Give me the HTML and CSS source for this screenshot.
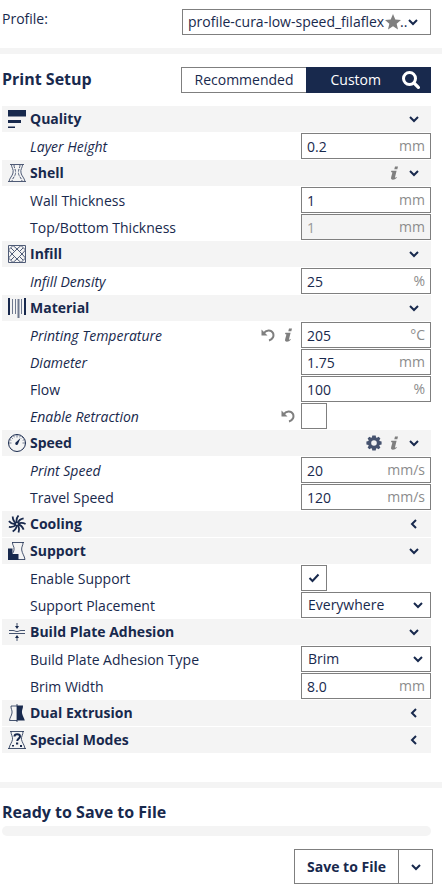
FILE: index.html
```html
<!DOCTYPE html>
<html lang="en">
<head>
<meta charset="utf-8">
<meta name="viewport" content="width=device-width, initial-scale=1">
<title>Print Setup</title>
<link rel="stylesheet" href="styles.css">
</head>
<body>
<svg class="defs" aria-hidden="true">
  <symbol id="down" viewBox="0 0 10 10"><path d="M1 3l4 4 4-4" fill="none" stroke="currentColor" stroke-width="2"/></symbol>
  <symbol id="left" viewBox="0 0 10 10"><path d="M7 1L3 5l4 4" fill="none" stroke="currentColor" stroke-width="2"/></symbol>
  <symbol id="info" viewBox="0 0 14 14"><path d="M8 .4h3l-.7 2.800h-3zM4.400 4.800h5.200L8 11.200c-.2.8.4.6 1.300-.3l.6.600c-1.300 1.500-2.600 2.200-3.900 2.200-1.700 0-2.200-.9-1.900-2.200L5.400 6.400 4 6z" fill="currentColor"/></symbol>
  <symbol id="undo" viewBox="0 0 14 14"><path d="M2.500 5.500C5 1.800 10 1.500 12 5c1.300 3-.3 6.500-4 7.500" fill="none" stroke="currentColor" stroke-width="2"/><path d="M.5 1.500v6h6z" fill="currentColor"/></symbol>
  <symbol id="gear" viewBox="0 0 16 16"><path fill="currentColor" fill-rule="evenodd" d="M6.300.5h3.400l.4 2 .8.300 1.700-1.100 1.800 1.800-1.100 1.700.300.800 2 .4v3.200l-2 .4-.3.800 1.100 1.700-1.800 1.800-1.700-1.100-.8.300-.4 2H6.300l-.4-2-.8-.3-1.700 1.100-1.800-1.800 1.100-1.700-.3-.8-2-.4V6.400l2-.4.300-.8-1.100-1.700 1.800-1.800 1.700 1.100.8-.3zM8 5.200a2.800 2.800 0 1 0 0 5.600 2.800 2.800 0 0 0 0-5.600z"/></symbol>
</svg>

<main>
  <section class="profile">
    <label for="profile">Profile:</label>
    <div class="select select-profile">
      <select id="profile"><option>profile-cura-low-speed_filaflex&nbsp;&nbsp;&nbsp;&nbsp;&hairsp;..</option></select>
      <svg class="star" viewBox="0 0 14 14" aria-hidden="true"><path d="M7 0l2 4.800 5 .4-3.800 3.300 1.200 5L7 10.800l-4.400 2.700 1.200-5L0 5.200l5-.4z"/></svg>
      <svg class="chevron"><use href="#down"/></svg>
    </div>
  </section>

  <section class="setup">
    <header class="setup-head">
      <h1>Print Setup</h1>
      <div class="tabs">
        <button type="button" class="tab">Recommended</button>
        <button type="button" class="tab tab-active">Custom
          <svg class="search" viewBox="0 0 18 18" aria-hidden="true"><circle cx="7.500" cy="7.500" r="6" fill="none" stroke="currentColor" stroke-width="3"/><path d="M11.500 11.500l6 6" stroke="currentColor" stroke-width="3.200"/></svg>
        </button>
      </div>
    </header>

    <div class="settings">
      <div class="category">
        <svg class="cat-icon" viewBox="0 0 18 18"><path d="M0 0h18v6.500H0zM0 10h13v3H0zM0 16.500h7V18H0z" fill="currentColor"/></svg>
        <h2>Quality</h2>
        <button type="button" class="icon" aria-label="Collapse"><svg class="chevron"><use href="#down"/></svg></button>
      </div>
      <div class="row changed">
        <label for="layer">Layer Height</label>
        <div class="field"><input id="layer" value="0.2"><span>mm</span></div>
      </div>

      <div class="category">
        <svg class="cat-icon thin" viewBox="0 0 18 18"><path d="M2 .5h14M0 17.500h18M3.500.5c-.3 3 2.500 4.500 1.500 8.500-.6 3-3.500 5-4 8.500M14.500.5c.3 3-2.500 4.500-1.500 8.500.6 3 3.500 5 4 8.500" fill="none" stroke="currentColor"/><path d="M6 1c0 3 2 4.500 1.500 8.500-.4 3-3 4.500-3.500 7.500M12 1c0 3-2 4.500-1.500 8.500.4 3 3 4.500 3.500 7.500" fill="none" stroke="currentColor" stroke-dasharray="3 1"/></svg>
        <h2>Shell</h2>
        <button type="button" class="icon grey" aria-label="Information"><svg class="info"><use href="#info"/></svg></button>
        <button type="button" class="icon" aria-label="Collapse"><svg class="chevron"><use href="#down"/></svg></button>
      </div>
      <div class="row">
        <label for="wall">Wall Thickness</label>
        <div class="field"><input id="wall" value="1"><span>mm</span></div>
      </div>
      <div class="row">
        <label for="topbottom">Top/Bottom Thickness</label>
        <div class="field disabled"><input id="topbottom" value="1" disabled><span>mm</span></div>
      </div>

      <div class="category">
        <svg class="cat-icon thin" viewBox="0 0 18 18"><path d="M.5.5h17v17H.5zM5 .5L.5 5M13 .5L17.500 5M.5 13L5 17.500M17.500 13L13 17.500M9 4l5 5-5 5-5-5zM5 .5L9 4l4-3.500M.5 5L4 9 .5 13M17.500 5L14 9l3.500 4M5 17.500L9 14l4 3.500M3 3l3 3M15 3l-3 3M3 15l3-3M15 15l-3-3" fill="none" stroke="currentColor"/></svg>
        <h2>Infill</h2>
        <button type="button" class="icon" aria-label="Collapse"><svg class="chevron"><use href="#down"/></svg></button>
      </div>
      <div class="row changed">
        <label for="density">Infill Density</label>
        <div class="field"><input id="density" value="25"><span>%</span></div>
      </div>

      <div class="category">
        <svg class="cat-icon tall" viewBox="0 0 18 20"><path d="M1 0v17M17 0v17" stroke="currentColor" stroke-width="2"/><path d="M4.500 1v15M7.500 1v15M13.500 1v15" stroke="currentColor" opacity=".6"/><path d="M10.500 1v19" stroke="currentColor" stroke-width="2" opacity=".6"/></svg>
        <h2>Material</h2>
        <button type="button" class="icon" aria-label="Collapse"><svg class="chevron"><use href="#down"/></svg></button>
      </div>
      <div class="row changed">
        <label for="temp">Printing Temperature</label>
        <button type="button" class="icon grey" aria-label="Reset"><svg class="undo"><use href="#undo"/></svg></button>
        <button type="button" class="icon grey" aria-label="Information"><svg class="info"><use href="#info"/></svg></button>
        <div class="field"><input id="temp" value="205"><span>°C</span></div>
      </div>
      <div class="row changed">
        <label for="diameter">Diameter</label>
        <div class="field"><input id="diameter" value="1.75"><span>mm</span></div>
      </div>
      <div class="row">
        <label for="flow">Flow</label>
        <div class="field"><input id="flow" value="100"><span>%</span></div>
      </div>
      <div class="row changed">
        <label for="retract">Enable Retraction</label>
        <button type="button" class="icon grey" aria-label="Reset"><svg class="undo"><use href="#undo"/></svg></button>
        <div class="check"><input id="retract" type="checkbox"><svg viewBox="0 0 12 10"><path d="M1.500 5l3 3 6-6.500"/></svg></div>
      </div>

      <div class="category">
        <svg class="cat-icon" viewBox="0 0 18 18"><circle cx="9" cy="9" r="8.500" fill="none" stroke="currentColor"/><path d="M9 1v2.500M1 9h2.500M17 9h-2.500M3.300 3.300l1.500 1.500M14.700 3.300l-1 1M5.500 1.500l.8 1.800M12.500 1.500l-.8 1.800M1.500 5.500l1.800.8M16.500 5.500l-1.800.8" stroke="currentColor" stroke-width=".6"/><path d="M12.500 4L10.200 9.500a1.500 1.500 0 1 1-2-1.500z" fill="currentColor"/></svg>
        <h2>Speed</h2>
        <button type="button" class="icon slate" aria-label="Visible settings"><svg class="gear"><use href="#gear"/></svg></button>
        <button type="button" class="icon grey" aria-label="Information"><svg class="info"><use href="#info"/></svg></button>
        <button type="button" class="icon" aria-label="Collapse"><svg class="chevron"><use href="#down"/></svg></button>
      </div>
      <div class="row changed">
        <label for="print-speed">Print Speed</label>
        <div class="field"><input id="print-speed" value="20"><span>mm/s</span></div>
      </div>
      <div class="row">
        <label for="travel">Travel Speed</label>
        <div class="field"><input id="travel" value="120"><span>mm/s</span></div>
      </div>

      <div class="category">
        <svg class="cat-icon" viewBox="0 0 18 18"><g fill="none" stroke="currentColor" stroke-width="1.800"><path id="blade" d="M9 8C8 5.500 8.500 3 10.500.5"/><use href="#blade" transform="rotate(40 9 9)"/><use href="#blade" transform="rotate(80 9 9)"/><use href="#blade" transform="rotate(120 9 9)"/><use href="#blade" transform="rotate(160 9 9)"/><use href="#blade" transform="rotate(200 9 9)"/><use href="#blade" transform="rotate(240 9 9)"/><use href="#blade" transform="rotate(280 9 9)"/><use href="#blade" transform="rotate(320 9 9)"/></g></svg>
        <h2>Cooling</h2>
        <button type="button" class="icon" aria-label="Expand"><svg class="chevron"><use href="#left"/></svg></button>
      </div>

      <div class="category">
        <svg class="cat-icon" viewBox="0 0 18 18"><path d="M0 6.500h4.500V12h6v6H0z" fill="currentColor"/><path d="M4 .5h12M4.500.5c-.3 2.500 2 4 1.500 7-.2 2-.8 3-1.500 4M15 .5c.3 2.500-1.800 4.500-1.300 7.500.5 3.500 2.800 6 3.300 9.500h-7" fill="none" stroke="currentColor" stroke-width=".8"/></svg>
        <h2>Support</h2>
        <button type="button" class="icon" aria-label="Collapse"><svg class="chevron"><use href="#down"/></svg></button>
      </div>
      <div class="row">
        <label for="support">Enable Support</label>
        <div class="check"><input id="support" type="checkbox" checked><svg viewBox="0 0 12 10"><path d="M1.500 5l3 3 6-6.500"/></svg></div>
      </div>
      <div class="row">
        <label for="placement">Support Placement</label>
        <div class="select"><select id="placement"><option>Everywhere</option></select><svg class="chevron"><use href="#down"/></svg></div>
      </div>

      <div class="category">
        <svg class="cat-icon" viewBox="0 0 18 18"><path d="M1 7.500h4c2 0 2 1 4 1s2-1 4-1h4M1 10.500h16M9 0v4M9 14v4" fill="none" stroke="currentColor" stroke-width=".8"/><path d="M7 3h4L9 6zM7 15h4L9 12z" fill="currentColor"/></svg>
        <h2>Build Plate Adhesion</h2>
        <button type="button" class="icon" aria-label="Collapse"><svg class="chevron"><use href="#down"/></svg></button>
      </div>
      <div class="row">
        <label for="adhesion">Build Plate Adhesion Type</label>
        <div class="select"><select id="adhesion"><option>Brim</option></select><svg class="chevron"><use href="#down"/></svg></div>
      </div>
      <div class="row">
        <label for="brim">Brim Width</label>
        <div class="field"><input id="brim" value="8.0"><span>mm</span></div>
      </div>

      <div class="category">
        <svg class="cat-icon" viewBox="0 0 18 18"><path d="M9 1.500h6c.3 3-1.500 4.500-1 7.500.5 3 2.300 5 2.800 7.500H9z" fill="currentColor"/><path d="M9 0v18M9 2H3c-.3 3 1.500 4 1 7s-2.200 4.500-2.500 7.500H9" fill="none" stroke="currentColor" stroke-width=".8"/></svg>
        <h2>Dual Extrusion</h2>
        <button type="button" class="icon" aria-label="Expand"><svg class="chevron"><use href="#left"/></svg></button>
      </div>
      <div class="category">
        <svg class="cat-icon" viewBox="0 0 18 18"><path d="M2 .5h14M0 17.500h18M3 .5c-.2 3 2 5 1.500 8S1.500 14 1 17.500M15 .5c.2 3-2 5-1.500 8s3 5.500 3.500 9" fill="none" stroke="currentColor" stroke-width=".8"/><path d="M6.500 5.500C6.500 2.500 12 2.500 12 5.500c0 2-2.500 2-2.800 4.500" fill="none" stroke="currentColor" stroke-width="2"/><path d="M8 11.500h2.200v2H8zM4 14h2v1.500H4zM12 14h2v2h-2z" fill="currentColor"/></svg>
        <h2>Special Modes</h2>
        <button type="button" class="icon" aria-label="Expand"><svg class="chevron"><use href="#left"/></svg></button>
      </div>
    </div>
  </section>

  <footer class="output">
    <h1>Ready to Save to File</h1>
    <div class="progress" role="progressbar" aria-label="Progress"></div>
    <div class="actions">
      <button type="button" class="save">Save to File</button>
      <button type="button" class="more" aria-label="More outputs"><svg class="chevron"><use href="#down"/></svg></button>
    </div>
  </footer>
</main>
</body>
</html>
```
FILE: styles.css
```css
:root {
  --ink: #18294d;
  --line: #7f7f7f;
  --band: #f4f4f4;
}

* { box-sizing: border-box; }

body {
  margin: 0;
  background: #fff;
  color: var(--ink);
  font: 14px/20px "Open Sans", "Noto Sans", sans-serif;
}

button, input, select {
  margin: 0;
  padding: 0;
  border: 0;
  border-radius: 0;
  background: none;
  color: inherit;
  font: inherit;
  appearance: none;
}

h1, h2 { margin: 0; font-weight: 700; }
h1 { font-size: 16px; line-height: 24px; }
h2 { flex: 1; font-size: 14px; line-height: 20px; }

svg { display: block; flex: none; }
.defs { position: absolute; width: 0; height: 0; }
.chevron { width: 10px; height: 10px; }

.profile {
  display: flex;
  justify-content: space-between;
  align-items: flex-start;
  padding: 9px 11px 13px 2px;
  border-bottom: 6px solid var(--band);
}

.select {
  position: relative;
  width: 130px;
  height: 26px;
  border: 1px solid var(--line);
  background: #fff;
}
.select select { width: 100%; height: 24px; padding-left: 6px; }
.select .chevron { position: absolute; right: 7px; top: 7px; pointer-events: none; }
.select-profile { width: 249px; }
.select-profile select { padding-left: 5px; }
.select-profile .chevron { right: 12px; }
.star { position: absolute; right: 29px; top: 4px; width: 16px; height: 16px; fill: var(--line); pointer-events: none; }

.setup { padding: 13px 11px 29px 2px; border-bottom: 6px solid var(--band); }
.setup-head { display: flex; justify-content: space-between; align-items: flex-start; margin-bottom: 13px; }

.tabs { display: grid; grid-template-columns: 1fr 1fr; width: 250px; height: 26px; }
.tab { border: 1px solid var(--line); border-right: 0; }
.tab-active {
  display: flex;
  align-items: center;
  justify-content: flex-end;
  gap: 21px;
  padding-right: 11px;
  border: 0;
  background: var(--ink);
  color: #fff;
}
.search { width: 18px; height: 18px; }

.settings { display: grid; grid-auto-rows: 26px; gap: 1px; }

.category { display: flex; align-items: center; padding: 0 7px 0 6px; background: var(--band); }
.cat-icon { width: 18px; height: 18px; margin-right: 4px; }
.cat-icon.tall { height: 20px; }
.cat-icon.thin { opacity: .75; }

.icon { display: flex; align-items: center; justify-content: center; width: 20px; height: 20px; }
.grey { color: var(--line); }
.slate { color: #46536f; }
.info, .undo { width: 14px; height: 14px; }
.gear { width: 16px; height: 16px; }

.row { display: flex; align-items: center; padding-left: 28px; }
.row label { flex: 1; padding-top: 2px; }
.changed label { font-style: italic; }
.row .field, .row .check, .row .select { margin-left: 3px; }
.row .check { margin-right: 104px; }

.field {
  display: flex;
  align-items: center;
  width: 130px;
  height: 26px;
  padding: 0 5px;
  border: 1px solid var(--line);
  background: #fff;
}
.field input { flex: 1; min-width: 0; height: 24px; }
.field span { color: #8c8c8c; }
.disabled { background: var(--band); }
.disabled input { color: #999; }

.check { display: grid; place-items: center; width: 26px; height: 26px; border: 1px solid var(--line); }
.check input, .check svg { grid-area: 1 / 1; }
.check input { width: 24px; height: 24px; }
.check svg { width: 12px; height: 10px; fill: none; stroke: currentColor; stroke-width: 2; visibility: hidden; pointer-events: none; }
.check input:checked + svg { visibility: visible; }

.output { padding: 12px 11px 3px 2px; }
.progress { height: 10px; margin-top: 2px; border-radius: 5px; background: var(--band); }
.actions { display: flex; justify-content: flex-end; height: 35px; margin: 13px -2px 0 0; }
.save { padding: 0 12px; border: 1px solid var(--line); font-weight: 700; }
.more { display: flex; align-items: center; justify-content: center; width: 34px; border: 1px solid var(--line); border-left: 0; }
```
